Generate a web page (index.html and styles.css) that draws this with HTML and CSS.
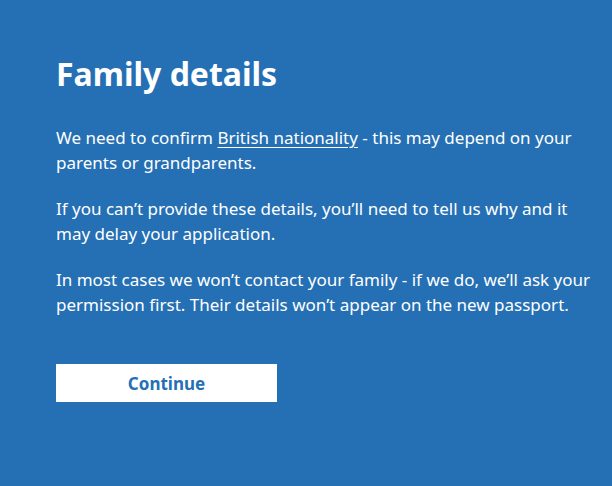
FILE: index.html
```html
<!DOCTYPE html>
<html lang="en">
<head>
  <meta charset="UTF-8">
  <meta name="viewport" content="width=device-width, initial-scale=1">
  <title>Family details</title>
  <link rel="stylesheet" href="styles.css">
</head>
<body>

  <main class="page">
    <h1 class="title">Family details</h1>

    <p class="body-text">We need to confirm <a href="#" class="link">British nationality</a> - this may depend on your parents or grandparents.</p>
    <p class="body-text">If you can’t provide these details, you’ll need to tell us why and it may delay your application.</p>
    <p class="body-text">In most cases we won’t contact your family - if we do, we’ll ask your permission first. Their details won’t appear on the new passport.</p>

    <button class="button" type="button">Continue</button>
  </main>

</body>
</html>
```

FILE: styles.css
```css
/* reset */
* { margin:0; padding:0; box-sizing:border-box; }
body {
  font-family: "Noto Sans", "Liberation Sans", sans-serif;
  background: #2570b4;
  color: #fff;
}

/* page column */
.page {
  padding: 54px 8px 0 56px;
}

.title {
  font-size: 32px;
  line-height: 40px;
  font-weight: 700;
  margin-bottom: 32px;
}

.body-text {
  font-size: 17px;
  line-height: 24.5px;
  margin-bottom: 22px;
}

.link {
  color: #fff;
  text-decoration: underline;
  text-underline-offset: 3px;
}

/* continue button */
.button {
  display: block;
  width: 221px;
  height: 38px;
  margin-top: 47px;
  border: 0;
  background: #fff;
  color: #2570b4;
  font-family: inherit;
  font-size: 17px;
  font-weight: 700;
  box-shadow: 0 2px 0 #0b2b4a;
  cursor: pointer;
}
```
